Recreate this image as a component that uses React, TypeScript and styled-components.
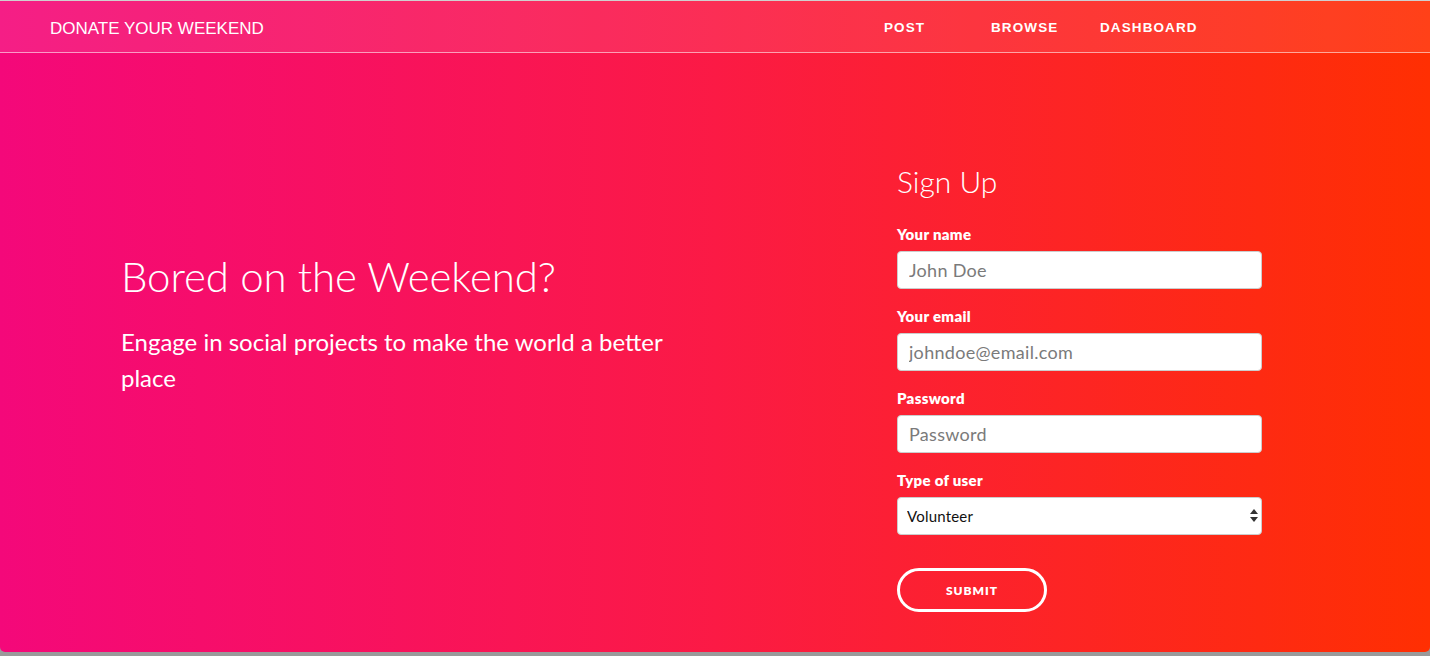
import React from "react";
import styled, { createGlobalStyle } from "styled-components";

const Global = createGlobalStyle`
  html, body { margin: 0; padding: 0; }
  body {
    background: #9a9a9a;
    font-family: "Liberation Sans", Arial, sans-serif;
    border-top: 1px solid #cfcfcf;
  }
  * { box-sizing: border-box; }
`;

const Page = styled.div`
  height: 651px;
  background: linear-gradient(to right, #f4087a 0%, #fb1a45 50%, #ff2f02 100%);
  border-radius: 0 0 5px 5px;
  overflow: hidden;
  display: flex;
  flex-direction: column;
`;

const Nav = styled.nav`
  height: 52px;
  background: rgba(255, 255, 255, 0.09);
  border-bottom: 1px solid rgba(255, 255, 255, 0.55);
  display: flex;
  align-items: center;
  padding-left: 50px;
  color: #fff;
`;

const Brand = styled.a`
  font-family: "Liberation Sans", Arial, sans-serif;
  font-size: 17px;
  letter-spacing: 0;
  color: #fff;
  text-decoration: none;
  margin-right: auto;
  margin-top: 4px;
`;

const NavLinks = styled.div`
  display: flex;
  align-items: center;
  margin-right: 233px;
  margin-top: 2px;
`;

const NavLink = styled.a<{ $w: number }>`
  font-family: "Liberation Sans", Arial, sans-serif;
  font-weight: bold;
  font-size: 13.5px;
  letter-spacing: 1.1px;
  color: #fff;
  text-decoration: none;
  width: ${(p) => p.$w}px;
`;

const Main = styled.main`
  flex: 1;
  display: flex;
`;

const Intro = styled.section`
  width: 897px;
  padding-left: 121px;
  padding-top: 198px;
  color: #fff;
  font-family: "Lato", "Noto Sans", sans-serif;
`;

const Title = styled.h1`
  margin: 0;
  font-weight: 300;
  font-size: 42px;
  line-height: 50px;
  letter-spacing: -0.1px;
`;

const Lead = styled.p`
  margin: 23px 0 0;
  width: 560px;
  font-weight: 400;
  font-size: 24px;
  line-height: 36px;
`;

const FormBox = styled.form`
  width: 365px;
  padding-top: 110px;
  display: flex;
  flex-direction: column;
  color: #fff;
  font-family: "Lato", "Noto Sans", sans-serif;
`;

const FormTitle = styled.h2`
  margin: 0 0 25px;
  font-weight: 300;
  font-size: 30px;
  line-height: 36px;
`;

const Field = styled.div`
  display: flex;
  flex-direction: column;
  margin-bottom: 17px;
`;

const Label = styled.label`
  font-weight: 800;
  font-size: 15px;
  letter-spacing: 0.3px;
  line-height: 20px;
  margin-bottom: 7px;
`;

const Input = styled.input`
  height: 38px;
  width: 100%;
  border: 1px solid #ccc;
  border-radius: 4px;
  background: #fff;
  padding: 0 11px;
  font-family: "Lato", "Noto Sans", sans-serif;
  font-size: 18px;
  letter-spacing: 0.3px;
  color: #555;
  outline: none;
  &::placeholder { color: #7a7a7a; }
`;

const SelectWrap = styled.div`
  position: relative;
`;

const Select = styled.select`
  appearance: none;
  -webkit-appearance: none;
  height: 38px;
  width: 100%;
  border: 1px solid #ccc;
  border-radius: 4px;
  background: #fff;
  padding: 0 24px 0 9px;
  font-family: "Lato", "Noto Sans", sans-serif;
  font-size: 15px;
  letter-spacing: 0.2px;
  color: #111;
  outline: none;
`;

const Arrows = styled.svg`
  position: absolute;
  right: 4px;
  top: 12px;
  pointer-events: none;
`;

const Submit = styled.button`
  margin-top: 16px;
  width: 150px;
  height: 44px;
  border: 3px solid #fff;
  border-radius: 22px;
  background: transparent;
  color: #fff;
  font-family: "Lato", "Noto Sans", sans-serif;
  font-weight: 800;
  font-size: 12px;
  letter-spacing: 1px;
  cursor: pointer;
`;

export default function App() {
  return (
    <>
      <Global />
      <Page>
        <Nav>
          <Brand href="#">DONATE YOUR WEEKEND</Brand>
          <NavLinks>
            <NavLink $w={107} href="#">POST</NavLink>
            <NavLink $w={109} href="#">BROWSE</NavLink>
            <NavLink $w={97} href="#">DASHBOARD</NavLink>
          </NavLinks>
        </Nav>
        <Main>
          <Intro>
            <Title>Bored on the Weekend?</Title>
            <Lead>Engage in social projects to make the world a better place</Lead>
          </Intro>
          <FormBox onSubmit={(e) => e.preventDefault()}>
            <FormTitle>Sign Up</FormTitle>
            <Field>
              <Label>Your name</Label>
              <Input placeholder="John Doe" />
            </Field>
            <Field>
              <Label>Your email</Label>
              <Input placeholder="johndoe@email.com" />
            </Field>
            <Field>
              <Label>Password</Label>
              <Input type="password" placeholder="Password" />
            </Field>
            <Field>
              <Label>Type of user</Label>
              <SelectWrap>
                <Select defaultValue="Volunteer">
                  <option>Volunteer</option>
                  <option>Organization</option>
                </Select>
                <Arrows width="8" height="13" viewBox="0 0 8 13">
                  <path d="M4 0 L8 5 L0 5 Z" fill="#333" />
                  <path d="M0 8 L8 8 L4 13 Z" fill="#333" />
                </Arrows>
              </SelectWrap>
            </Field>
            <Submit type="submit">SUBMIT</Submit>
          </FormBox>
        </Main>
      </Page>
    </>
  );
}
